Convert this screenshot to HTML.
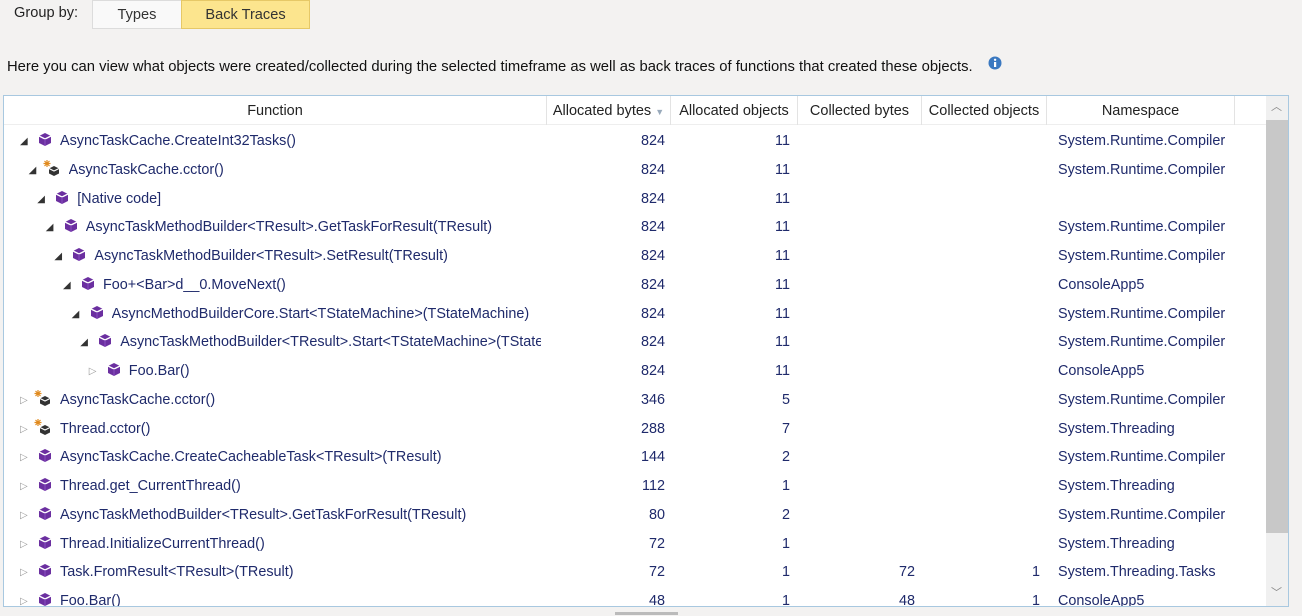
<!DOCTYPE html>
<html><head><meta charset="utf-8"><style>
*{box-sizing:border-box;margin:0;padding:0}
body{width:1302px;height:616px;background:#f3f2f1;font-family:"Liberation Sans",sans-serif;font-size:15px;color:#1b1b1b;position:relative;overflow:hidden}
.abs{position:absolute;white-space:nowrap}
.btn{position:absolute;top:0;height:29px;line-height:29px;text-align:center;border:1px solid #dcdcdc;font-size:14.6px;color:#333}
.box{position:absolute;left:3px;top:95px;width:1286px;height:512px;border:1px solid #a8c8e0;background:#fff;overflow:hidden}
.hdr{position:absolute;left:0;top:0;height:29px;width:1262px;background:#fff;border-bottom:1px solid #eee;font-size:14.5px}
.hc{position:absolute;top:0;height:29px;line-height:31px;text-align:center;border-right:1px solid #e3e3e3;color:#222}
.row{position:absolute;left:0;width:1262px;height:29px;line-height:31px;color:#1f2a6b;font-size:14.4px}
.row span{position:absolute;white-space:nowrap}
.num{text-align:right}
.arr{font-size:10px;color:#333}
.arr.c{color:#999}
</style></head><body>
<div class="abs" style="left:14px;top:5px;color:#222;font-size:14.6px">Group by:</div>
<div class="btn" style="left:92px;width:90px;background:#f9f9f9">Types</div>
<div class="btn" style="left:181px;width:129px;background:#fce58e;border-color:#e6c867">Back Traces</div>
<div class="abs" style="left:7px;top:59px;color:#111;font-size:14.8px">Here you can view what objects were created/collected during the selected timeframe as well as back traces of functions that created these objects.</div>
<svg class="abs" style="left:988px;top:56px" width="14" height="14"><circle cx="7" cy="7" r="6.5" fill="#3a78c0"/><rect x="6" y="6" width="2.2" height="5" fill="#fff"/><circle cx="7.1" cy="3.8" r="1.2" fill="#fff"/></svg>
<div class="box">
<div class="hdr">
<div class="hc" style="left:0;width:543px">Function</div>
<div class="hc" style="left:543px;width:124px">Allocated bytes <span style="color:#9ab;font-size:9px">▼</span></div>
<div class="hc" style="left:667px;width:127px">Allocated objects</div>
<div class="hc" style="left:794px;width:124px">Collected bytes</div>
<div class="hc" style="left:918px;width:125px">Collected objects</div>
<div class="hc" style="left:1043px;width:188px">Namespace</div>
</div>
<div id="rows"></div>
<div style="position:absolute;left:1262px;top:0;width:22px;height:510px;background:#f0f0f0"></div>
<div style="position:absolute;left:1262px;top:24px;width:22px;height:413px;background:#c8c8c8"></div>
<div class="abs" style="left:1267px;top:2px;color:#888;font-size:11px">︿</div>
<div class="abs" style="left:1267px;top:488px;color:#888;font-size:11px">﹀</div>
</div>
<div class="abs" style="left:615px;top:612px;width:63px;height:3px;background:#bbb"></div>
<script>
var R=[[0,1,0,"AsyncTaskCache.CreateInt32Tasks()","824","11","","","System.Runtime.Compiler"],
[1,1,1,"AsyncTaskCache.cctor()","824","11","","","System.Runtime.Compiler"],
[2,1,0,"[Native code]","824","11","","",""],
[3,1,0,"AsyncTaskMethodBuilder&lt;TResult&gt;.GetTaskForResult(TResult)","824","11","","","System.Runtime.Compiler"],
[4,1,0,"AsyncTaskMethodBuilder&lt;TResult&gt;.SetResult(TResult)","824","11","","","System.Runtime.Compiler"],
[5,1,0,"Foo+&lt;Bar&gt;d__0.MoveNext()","824","11","","","ConsoleApp5"],
[6,1,0,"AsyncMethodBuilderCore.Start&lt;TStateMachine&gt;(TStateMachine)","824","11","","","System.Runtime.Compiler"],
[7,1,0,"AsyncTaskMethodBuilder&lt;TResult&gt;.Start&lt;TStateMachine&gt;(TStateMachine)","824","11","","","System.Runtime.Compiler"],
[8,0,0,"Foo.Bar()","824","11","","","ConsoleApp5"],
[0,0,1,"AsyncTaskCache.cctor()","346","5","","","System.Runtime.Compiler"],
[0,0,1,"Thread.cctor()","288","7","","","System.Threading"],
[0,0,0,"AsyncTaskCache.CreateCacheableTask&lt;TResult&gt;(TResult)","144","2","","","System.Runtime.Compiler"],
[0,0,0,"Thread.get_CurrentThread()","112","1","","","System.Threading"],
[0,0,0,"AsyncTaskMethodBuilder&lt;TResult&gt;.GetTaskForResult(TResult)","80","2","","","System.Runtime.Compiler"],
[0,0,0,"Thread.InitializeCurrentThread()","72","1","","","System.Threading"],
[0,0,0,"Task.FromResult&lt;TResult&gt;(TResult)","72","1","72","1","System.Threading.Tasks"],
[0,0,0,"Foo.Bar()","48","1","48","1","ConsoleApp5"]];
var cube='<svg width="14" height="15" viewBox="0 0 14 15"><path d="M7 1L13 4V11L7 14L1 11V4Z" fill="#6b2fa0"/><path d="M1 4L7 7L13 4" stroke="#fff" stroke-width="1.4" fill="none"/><path d="M7 7V14" stroke="#8a4fc0" stroke-width="1"/></svg>';
var cc='<svg width="18" height="16" viewBox="0 0 18 16"><g stroke="#e08a1e" stroke-width="1.2"><path d="M4 0V7M0.5 3.5H7.5M1.5 1L6.5 6M6.5 1L1.5 6"/></g><path d="M11 6L16 8.5V13.5L11 16L6 13.5V8.5Z" fill="#333"/><path d="M6 8.5L11 11L16 8.5" stroke="#fff" stroke-width="1.1" fill="none"/></svg>';
var h='';
R.forEach(function(r,i){var x=16+r[0]*8.6,top=30+i*28.75;
h+='<div class="row" style="top:'+top+'px">'+
'<span class="arr'+(r[1]?'':' c')+'" style="left:'+x+'px">'+(r[1]?'◢':'▷')+'</span>'+
'<span style="left:'+(x+(r[2]?14:18))+'px;top:'+(r[2]?5:6)+'px;line-height:0">'+(r[2]?cc:cube)+'</span>'+
'<span style="left:'+(x+40)+'px;width:'+(537-x-40)+'px;overflow:hidden">'+r[3]+'</span>'+
'<span class="num" style="left:543px;width:118px">'+r[4]+'</span>'+
'<span class="num" style="left:667px;width:119px">'+r[5]+'</span>'+
'<span class="num" style="left:794px;width:117px">'+r[6]+'</span>'+
'<span class="num" style="left:918px;width:118px">'+r[7]+'</span>'+
'<span style="left:1054px">'+r[8]+'</span></div>';});
document.getElementById('rows').innerHTML=h;
</script>
</body></html>
